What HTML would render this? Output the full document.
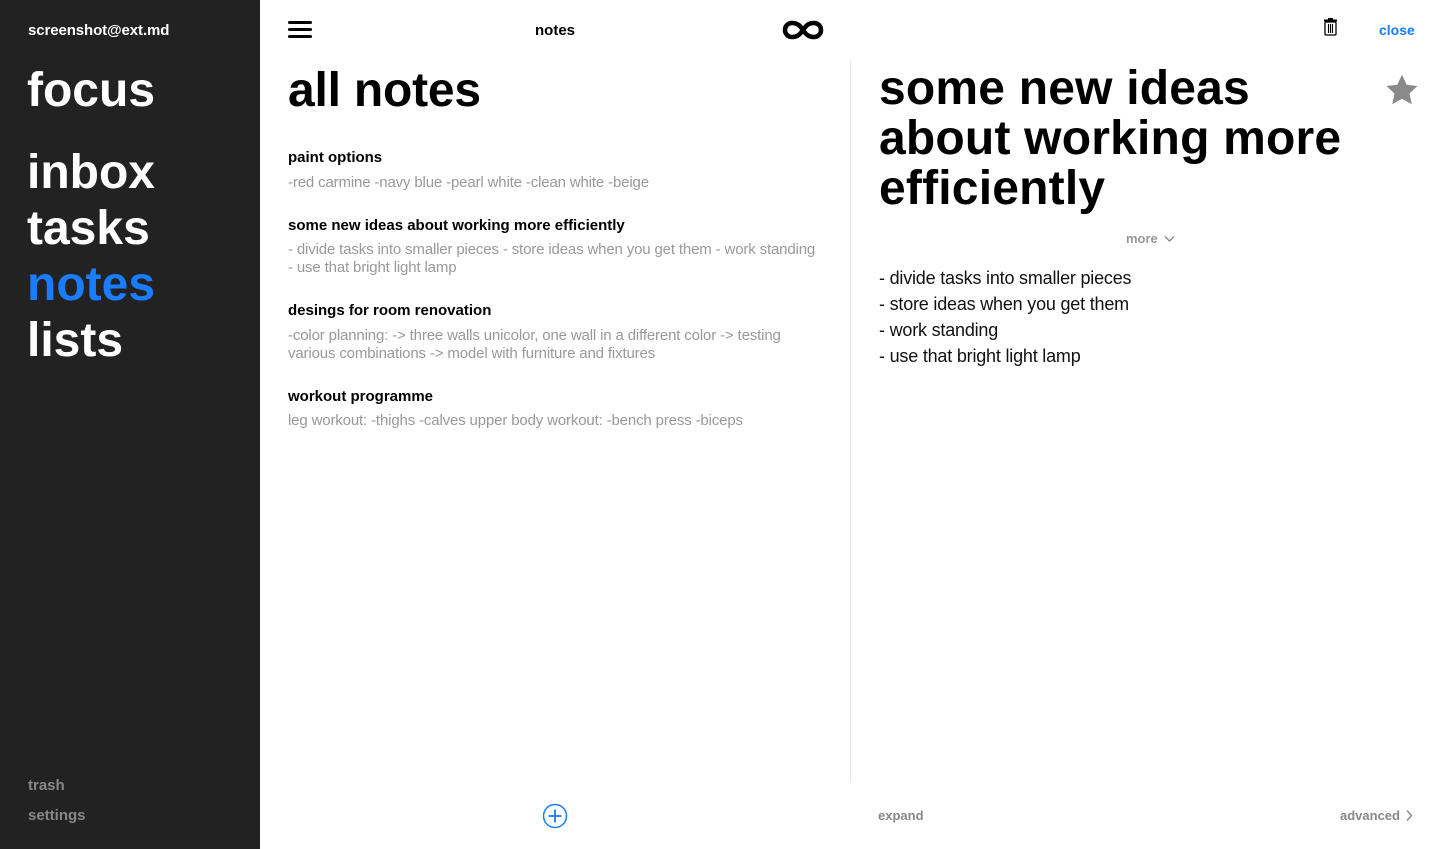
<!DOCTYPE html>
<html><head><meta charset="utf-8"><style>
*{margin:0;padding:0;box-sizing:border-box}
body{width:1440px;height:849px;overflow:hidden;background:#fff;font-family:"Liberation Sans",Arial,sans-serif;position:relative;color:#000}
.a{position:absolute;white-space:nowrap}
#side{position:absolute;left:0;top:0;width:260px;height:849px;background:#222}
.nav{font-weight:bold;font-size:48px;color:#fff;letter-spacing:0px}
.nt{font-weight:bold;font-size:15px}
.np{font-size:15px;color:#999;line-height:18px;letter-spacing:-0.15px}
.bl{font-size:18px;color:#111;letter-spacing:-0.2px}
</style></head><body>
<div id="side">
<div class="a" style="left:28px;top:22px;font-size:15px;font-weight:bold;color:#fff;letter-spacing:-0.1px">screenshot@ext.md</div>
<div class="a nav" style="left:27px;top:63px">focus</div>
<div class="a nav" style="left:27px;top:145px">inbox</div>
<div class="a nav" style="left:27px;top:201px">tasks</div>
<div class="a nav" style="left:27px;top:257px;color:#1a7cff">notes</div>
<div class="a nav" style="left:27px;top:313px">lists</div>
<div class="a" style="left:28px;top:777px;font-size:15px;font-weight:bold;color:#888">trash</div>
<div class="a" style="left:28px;top:807px;font-size:15px;font-weight:bold;color:#888">settings</div>
</div>
<div class="a" style="left:288px;top:21px;width:24px;height:3px;background:#000;border-radius:2px"></div>
<div class="a" style="left:288px;top:28px;width:24px;height:3px;background:#000;border-radius:2px"></div>
<div class="a" style="left:288px;top:35px;width:24px;height:3px;background:#000;border-radius:2px"></div>
<div class="a" style="left:535px;top:22px;font-size:15px;font-weight:bold">notes</div>
<svg class="a" style="left:782px;top:20px" width="42" height="20" viewBox="0 0 42 20"><path d="M21 10C17 4 14 3 10 3 6 3 3 6 3 10s3 7 7 7c4 0 7-1 11-7 4-6 7-7 11-7 4 0 7 3 7 7s-3 7-7 7c-4 0-7-1-11-7" fill="none" stroke="#000" stroke-width="4.5"/></svg>
<svg class="a" style="left:1323px;top:18px" width="15" height="18" viewBox="0 0 15 18"><rect x="1" y="1.5" width="13" height="2" fill="#000"/><rect x="5" y="0" width="5" height="2" fill="#000"/><rect x="2" y="4" width="11" height="13" fill="none" stroke="#000" stroke-width="1.3" rx="1"/><path d="M5.5 6v9M7.5 6v9M9.5 6v9" stroke="#000" stroke-width="1.1"/></svg>
<div class="a" style="left:1379px;top:22px;font-size:14px;font-weight:bold;color:#1a7cff">close</div>
<div class="a" style="left:288px;top:63px;font-size:48px;font-weight:bold;letter-spacing:-0.2px">all notes</div>
<div class="a nt" style="left:288px;top:149px">paint options</div>
<div class="a np" style="left:288px;top:174px">-red carmine -navy blue -pearl white -clean white -beige</div>
<div class="a nt" style="left:288px;top:217px">some new ideas about working more efficiently</div>
<div class="a np" style="left:288px;top:241px">- divide tasks into smaller pieces - store ideas when you get them - work standing<br>- use that bright light lamp</div>
<div class="a nt" style="left:288px;top:302px">desings for room renovation</div>
<div class="a np" style="left:288px;top:327px">-color planning: -&gt; three walls unicolor, one wall in a different color -&gt; testing<br>various combinations -&gt; model with furniture and fixtures</div>
<div class="a nt" style="left:288px;top:388px">workout programme</div>
<div class="a np" style="left:288px;top:412px">leg workout: -thighs -calves upper body workout: -bench press -biceps</div>
<div class="a" style="left:850px;top:60px;width:1px;height:722px;background:#e6e6e6"></div>
<div class="a" style="left:879px;top:64px;font-size:48px;font-weight:bold;line-height:50px;letter-spacing:0.2px">some new ideas<br>about working more<br>efficiently</div>
<svg class="a" style="left:1385px;top:74px" width="34" height="32" viewBox="0 0 24 23"><path d="M12 0.5l3.4 7.2 7.8.9-5.8 5.4 1.6 7.7L12 17.8l-7 3.9 1.6-7.7L.8 8.6l7.8-.9z" fill="#8a8a8a"/></svg>
<div class="a" style="left:1126px;top:231px;font-size:13px;font-weight:bold;color:#999">more</div>
<svg class="a" style="left:1164px;top:235px" width="11" height="8" viewBox="0 0 11 8"><path d="M1 1.5l4.5 4.5 4.5-4.5" fill="none" stroke="#888" stroke-width="1.4"/></svg>
<div class="a bl" style="left:879px;top:265px;line-height:26px">- divide tasks into smaller pieces<br>- store ideas when you get them<br>- work standing<br>- use that bright light lamp</div>
<svg class="a" style="left:542px;top:803px" width="26" height="26" viewBox="0 0 26 26"><circle cx="13" cy="13" r="11.5" fill="none" stroke="#1a7cff" stroke-width="1.5"/><path d="M13 6.5v13M6.5 13h13" stroke="#1a7cff" stroke-width="1.8"/></svg>
<div class="a" style="left:878px;top:808px;font-size:13px;font-weight:bold;color:#888">expand</div>
<div class="a" style="left:1340px;top:808px;font-size:13px;font-weight:bold;color:#888">advanced</div>
<svg class="a" style="left:1405px;top:809px" width="8" height="13" viewBox="0 0 8 13"><path d="M2 1.5l4.5 5-4.5 5" fill="none" stroke="#888" stroke-width="1.4"/></svg>
</body></html>
